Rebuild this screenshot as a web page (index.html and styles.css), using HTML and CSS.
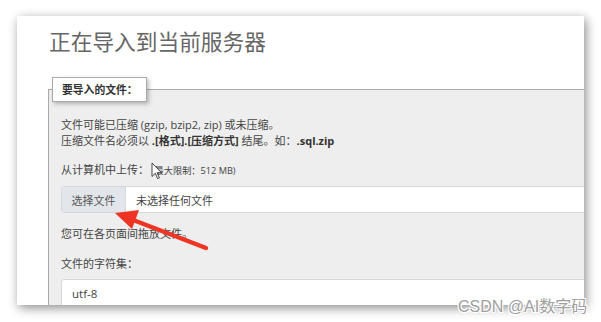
FILE: index.html
```html
<!DOCTYPE html>
<html lang="zh">

<head>
    <meta charset="UTF-8">
    <meta name="viewport" content="width=device-width, initial-scale=1.0">
    <title>导入</title>
    <link rel="stylesheet" href="styles.css">
</head>

<body>
    <div class="window">
        <h2 class="title">正在导入到当前服务器</h2>
        <fieldset class="import-box">
            <legend>要导入的文件：</legend>
            <p class="desc">文件可能已压缩 (gzip, bzip2, zip) 或未压缩。<br>压缩文件名必须以 <b>.[格式].[压缩方式]</b> 结尾。如：<b>.sql.zip</b></p>
            <p class="upload-label">从计算机中上传： <span class="limit">(最大限制：512 MB)</span></p>
            <div class="file-input">
                <span class="file-btn">选择文件</span>
                <span class="file-name">未选择任何文件</span>
            </div>
            <p class="hint">您可在各页面间拖放文件。</p>
            <p class="charset-label">文件的字符集：</p>
            <div class="select">utf-8</div>
        </fieldset>
    </div>

    <!-- annotation arrow -->
    <svg class="arrow" width="110" height="50" viewBox="0 0 110 50">
        <line x1="98" y1="42" x2="20" y2="12" stroke="#ee3524" stroke-width="4.5" stroke-linecap="round"/>
        <polygon points="7,7 31,4 24,23" fill="#ee3524"/>
    </svg>

    <svg class="cursor" width="12" height="18" viewBox="0 0 12 18">
        <path d="M1 1 L1 14.5 L4.3 11.3 L6.6 16.6 L8.4 15.8 L6.2 10.7 L10.5 10.7 Z" fill="#fff" stroke="#333" stroke-width="0.9"/>
    </svg>

    <div class="watermark">CSDN @AI数字码</div>
</body>

</html>
```

FILE: styles.css
```css
body {
    margin: 0;
    background-color: #fff;
    font-family: "Open Sans", "Noto Sans CJK SC", sans-serif;
    color: #444;
    width: 601px;
    height: 322px;
    overflow: hidden;
    position: relative;
}

.window {
    margin: 16px 0 0 17px;
    width: 567px;
    height: 289px;
    background-color: #fff;
    overflow: hidden;
    box-shadow: 2px 3px 10px rgba(0, 0, 0, 0.45);
    padding-top: 13px;
    box-sizing: border-box;
}

.title {
    margin: 0 0 0 32px;
    font-size: 21.7px;
    line-height: 26px;
    font-weight: normal;
    color: #666;
}

.import-box {
    margin: 22px -60px 0 31px;
    padding: 15px 12px 20px 12px;
    background-color: #eee;
    border: 1px solid #aaa;
    min-height: 260px;
}

.import-box legend {
    margin-left: -9px;
    padding: 0 8px 0 9px;
    height: 25px;
    box-sizing: border-box;
    line-height: 23px;
    background-color: #fff;
    border: 1px solid #aaa;
    box-shadow: 2px 2px 4px rgba(0, 0, 0, 0.25);
    font-size: 10.8px;
    font-weight: bold;
    color: #333;
}

.import-box p {
    margin: 0;
    font-size: 11px;
    line-height: 16px;
}

.desc b {
    color: #333;
}

.upload-label {
    margin-top: 13px !important;
}

.limit {
    font-size: 9.2px;
}

.file-input {
    margin-top: 7px;
    height: 27px;
    display: flex;
    align-items: stretch;
    background-color: #fff;
    border: 1px solid #d4d8dd;
    border-radius: 3px;
    box-sizing: border-box;
    font-size: 11px;
    overflow: hidden;
}

.file-btn {
    width: 63px;
    display: flex;
    align-items: center;
    justify-content: center;
    background-color: #e2e5e9;
    border-right: 1px solid #d4d8dd;
    color: #555;
}

.file-name {
    display: flex;
    align-items: center;
    padding-left: 10px;
    color: #444;
}

.hint {
    margin-top: 13px !important;
}

.charset-label {
    margin-top: 14px !important;
}

.select {
    margin-top: 7px;
    height: 32px;
    padding: 6px 10px;
    box-sizing: border-box;
    background-color: #fff;
    border: 1px solid #d4d8dd;
    border-radius: 3px;
    font-size: 11.5px;
    line-height: 16px;
    color: #444;
}

.arrow {
    position: absolute;
    left: 108px;
    top: 206px;
}

.cursor {
    position: absolute;
    left: 151px;
    top: 162px;
}

.watermark {
    position: absolute;
    left: 458px;
    top: 293px;
    font-family: "Liberation Sans", "Noto Sans CJK SC", sans-serif;
    font-size: 16px;
    color: #a0a0a0;
    text-shadow: 1px 1px 0 #fff, -1px -1px 0 #fff, 1px -1px 0 #fff, -1px 1px 0 #fff;
}
```
